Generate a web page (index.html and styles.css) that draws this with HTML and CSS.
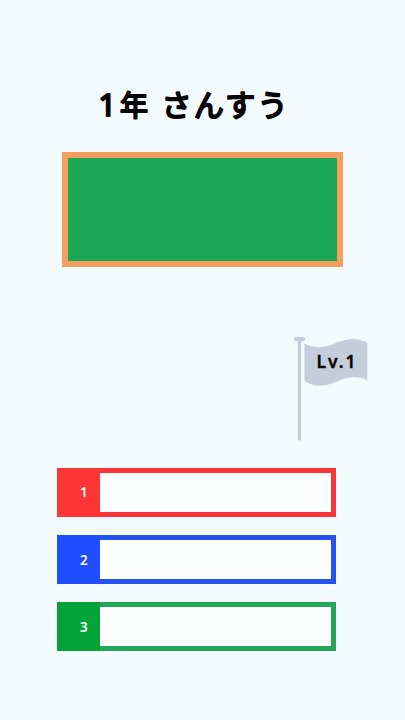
FILE: index.html
```html
<!DOCTYPE html>
<html lang="ja">
<head>
<meta charset="utf-8">
<meta name="viewport" content="width=device-width, initial-scale=1">
<title>1年 さんすう</title>
<link rel="stylesheet" href="styles.css">
</head>
<body>
<main class="screen">
  <h1 class="title">
    <svg class="title-art" width="200" height="40" viewBox="0 0 200 40">
      <text class="numeral" x="-.5" y="31.300">1</text>
      <text x="21" y="30.700" class="kanji">年</text>
      <text x="62.500" y="30.500" textLength="126">さんすう</text>
    </svg>
  </h1>
  <section class="board"></section>
  <div class="level">
    <svg class="flag" width="74" height="104" viewBox="0 0 74 104" aria-hidden="true">
      <rect x="0" y="0" width="11" height="4.3" rx="1.800"/>
      <rect x="3.8" y="2" width="3.4" height="101.4" rx="1"/>
      <path d="M10.5 6.5C21 12 31 11 43 5.500C54 1 65 .5 73.300 6V43.500C64 38 54 39.500 43 44.500C30 50 20 50.500 10.500 44Z"/>
      <text class="level-text" x="22.500" y="31.300" textLength="39">Lv.1</text>
    </svg>
  </div>
  <div class="answers">
    <div class="answer red"><span class="number">1</span></div>
    <div class="answer blue"><span class="number">2</span></div>
    <div class="answer green"><span class="number">3</span></div>
  </div>
</main>
</body>
</html>
```

FILE: styles.css
```css
* { box-sizing: border-box; }
body {
  margin: 0;
  background: #f3fbff;
  font-family: "Noto Sans", "Noto Sans CJK JP", sans-serif;
}
.screen {
  display: flex;
  flex-direction: column;
  height: 720px;
  padding-top: 85px;
}
.title {
  height: 40px;
  margin: 0 0 27px 99px;
}
.title-art {
  display: block;
  overflow: visible;
  font: 400 30px "Noto Sans CJK JP", sans-serif;
  fill: #050505;
  stroke: #050505;
  stroke-width: 2px;
  stroke-linejoin: round;
}
.numeral { font: 400 31px "Noto Sans", sans-serif; }
.kanji { font-size: 28px; }
.board {
  width: 281px;
  height: 115px;
  margin-left: 62px;
  border: 6px solid #f49e60;
  background: #1ba755;
}
.level {
  height: 104px;
  margin: 70px 0 0 294px;
}
.flag { display: block; fill: #c4cddb; }
.level-text {
  font: 600 17.500px "Noto Sans", sans-serif;
  fill: #050505;
  stroke: #050505;
  stroke-width: .4px;
  stroke-linejoin: round;
}
.answers {
  display: grid;
  gap: 18px;
  width: 279px;
  margin: 27px 0 0 57px;
}
.answer {
  display: flex;
  height: 49px;
  border: 5px solid var(--edge);
  border-left: 0;
  background: #fcfefd;
}
.number {
  width: 43px;
  margin: -5px 0;
  padding-left: 23px;
  background: var(--fill);
  color: #fff;
  font-size: 13.500px;
  font-weight: 600;
  line-height: 49px;
}
.blue .number, .green .number { line-height: 51px; }
.red { --fill: #ff3434; --edge: #f83538; }
.blue { --fill: #204eff; --edge: #2652ed; }
.green { --fill: #04a338; --edge: #24a659; }
```
